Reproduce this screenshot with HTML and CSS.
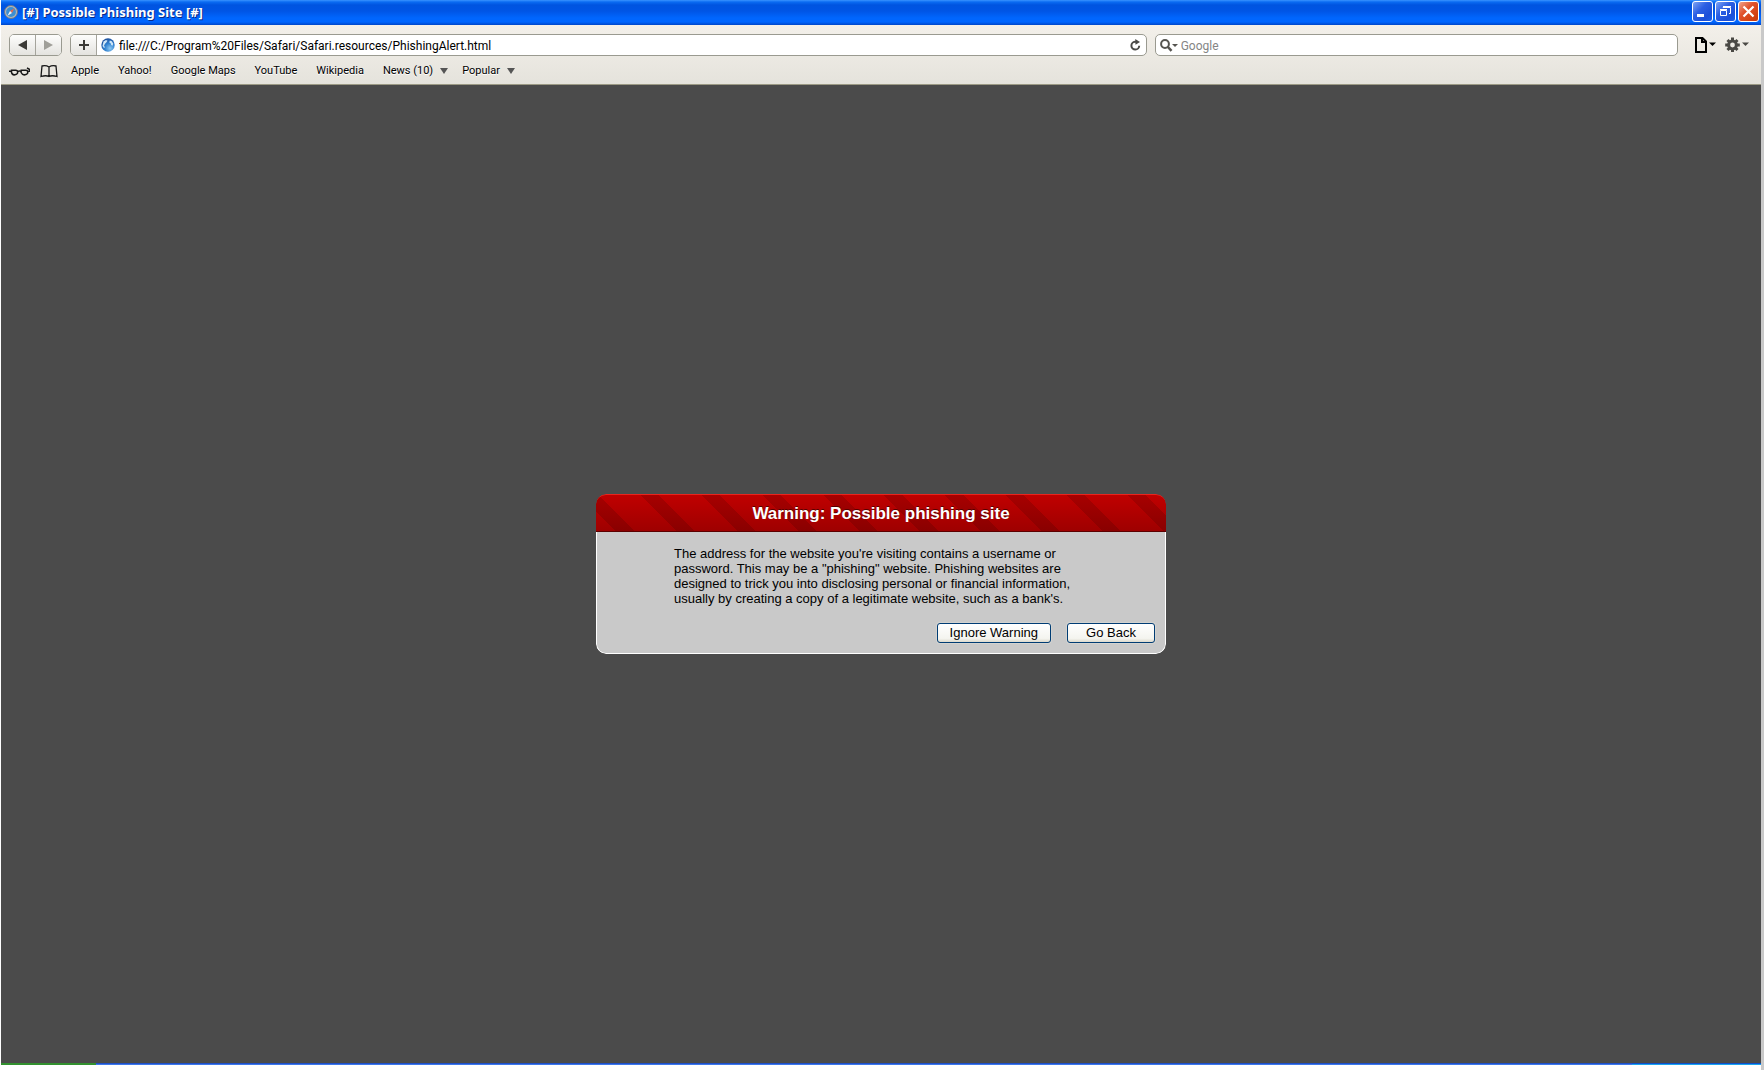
FILE: index.html
```html
<!DOCTYPE html>
<html lang="en">
<head>
<meta charset="utf-8">
<title>[#] Possible Phishing Site [#]</title>
<link rel="stylesheet" href="styles.css">
</head>
<body>
<div class="window">
  <header class="titlebar">
    <svg class="app-icon" width="14" height="14" viewBox="0 0 14 14" aria-hidden="true">
      <circle cx="7" cy="7" r="6.5" fill="#b9b9b9" stroke="#66778c"/>
      <circle cx="7" cy="7" r="4.9" fill="#3b8fd3"/>
      <path d="M10.5 3.2 8 8 6 6z" fill="#e56a4e"/>
      <path d="M3.5 10.8 8 8 6 6z" fill="#f4f7fa"/>
    </svg>
    <h1 class="title">[#] Possible Phishing Site [#]</h1>
    <div class="caption-buttons">
      <button class="caption" type="button" aria-label="Minimize">
        <svg width="19" height="19" viewBox="0 0 19 19"><path d="M4 12h7v3H4z" fill="#fff"/></svg>
      </button>
      <button class="caption" type="button" aria-label="Restore">
        <svg width="19" height="19" viewBox="0 0 19 19" fill="none" stroke="#fff"><path d="M7 6V5.500h7.500v6H13M7 4.500h8M4.500 8.500h6v5h-6zM4 7.500h7"/></svg>
      </button>
      <button class="caption caption-close" type="button" aria-label="Close">
        <svg width="19" height="19" viewBox="0 0 19 19"><path d="M4.500 4.500l10 10M14.500 4.500l-10 10" stroke="#fff" stroke-width="2.200"/></svg>
      </button>
    </div>
  </header>

  <div class="chrome">
    <div class="toolbar">
      <div class="nav">
        <button class="nav-btn" type="button" aria-label="Back"><svg width="9" height="10" viewBox="0 0 9 10"><path d="M9 0v10L0 5z" fill="#3c3b37"/></svg></button>
        <button class="nav-btn" type="button" aria-label="Forward"><svg width="9" height="10" viewBox="0 0 9 10"><path d="M0 0v10l9-5z" fill="#a09f99"/></svg></button>
      </div>
      <div class="address">
        <button class="add" type="button" aria-label="Add bookmark"><svg width="10" height="10" viewBox="0 0 10 10"><path d="M4 0h2v4h4v2H6v4H4V6H0V4h4z" fill="#3c3b37"/></svg></button>
        <svg class="globe" width="14" height="14" viewBox="0 0 14 14" aria-hidden="true">
          <defs><radialGradient id="sea" cx=".65" cy=".75" r=".8"><stop offset="0" stop-color="#8cc8f2"/><stop offset=".5" stop-color="#2f80cf"/><stop offset="1" stop-color="#1c4c98"/></radialGradient></defs>
          <circle cx="7" cy="7" r="6.700" fill="url(#sea)"/>
          <path d="M2.500 3.500 5 2l1.500.8-1 1.500-1.500 1.500-1 2 1 1.500-1 .7L1.500 8zM8.800 2.500l2 .8 1.500 2.400-.8 2-1.300-.7-.4-1.500-1.500-1z" fill="#cfe6f7"/>
        </svg>
        <input class="url" type="text" aria-label="Address" value="file:///C:/Program%20Files/Safari/Safari.resources/PhishingAlert.html">
        <button class="reload" type="button" aria-label="Reload"><svg width="11" height="12" viewBox="0 0 11 12"><path d="M6 2.800H5A3.900 3.900 0 1 0 9.200 6.700" fill="none" stroke="#4b4a48" stroke-width="2"/><path d="M5.200 0 10 3 5.500 5.800z" fill="#4b4a48"/></svg></button>
      </div>
      <div class="search">
        <svg width="18" height="13" viewBox="0 0 18 13" aria-hidden="true"><circle cx="5" cy="5" r="3.900" fill="none" stroke="#555450" stroke-width="2"/><path d="M7.500 7.500l4 4.300" stroke="#555450" stroke-width="2.500"/><path d="M12 5h6l-3 3z" fill="#555450"/></svg>
        <input class="query" type="text" aria-label="Search" placeholder="Google">
      </div>
      <div class="menus">
        <button class="menu" type="button" aria-label="Page menu"><svg width="21" height="16" viewBox="0 0 21 16"><path d="M1 1h6.500L11 4.500V15H1zM7 1v4h4" fill="none" stroke="#000" stroke-width="2"/><path d="M14 5.500h7L17.500 9z" fill="#000"/></svg></button>
        <button class="menu" type="button" aria-label="Settings menu"><svg width="24" height="16" viewBox="0 0 24 16"><g stroke="#4a4945" stroke-width="3"><path d="M7.500.5v3.500M7.500 11.500v3.500M.2 8h3.500M11.300 8h3.500M2.500 3l2 2M10.500 11l2 2M2.500 13l2-2M10.500 5l2-2"/></g><circle cx="7.500" cy="8" r="3.900" fill="none" stroke="#4a4945" stroke-width="3"/><path d="M17 5.500h7L20.500 9z" fill="#4a4945"/></svg></button>
      </div>
    </div>
    <nav class="bookmarks" aria-label="Bookmarks">
      <button class="icon-btn" type="button" aria-label="Reading list"><svg width="21" height="9" viewBox="0 0 21 9" fill="none" stroke="#181818" stroke-width="1.500"><path d="M2.500 3.300h4.200q2 0 2 2t-2.700 2.500-3.500-2.300zM12.200 3.300h4.600q2 0 2 2t-2.700 2.500-4-2.300zM8.700 4.500q2-1 3.500 0M0 4.300h3M18 4.300h2.800V2.500L18 1"/></svg></button>
      <button class="icon-btn" type="button" aria-label="All bookmarks"><svg width="18" height="13" viewBox="0 0 18 13" fill="none" stroke="#181818" stroke-width="1.300"><path d="M9 2v9.500M9 2Q6 0 2 1L1 11.500q5-1.500 8 0 3-1.500 8 0L16 1q-4-1-7 1"/></svg></button>
      <a class="link" href="#">Apple</a>
      <a class="link" href="#">Yahoo!</a>
      <a class="link" href="#">Google Maps</a>
      <a class="link" href="#">YouTube</a>
      <a class="link" href="#">Wikipedia</a>
      <a class="link folder" href="#">News (10)</a>
      <a class="link folder" href="#">Popular</a>
    </nav>
  </div>

  <main class="page">
    <section class="alert" role="alertdialog" aria-labelledby="alert-title">
      <h2 class="alert-title" id="alert-title">Warning: Possible phishing site</h2>
      <div class="alert-body">
        <p class="message">The address for the website you're visiting contains a username or password. This may be a "phishing" website. Phishing websites are designed to trick you into disclosing personal or financial information, usually by creating a copy of a legitimate website, such as a bank's.</p>
        <div class="actions">
          <button class="action" type="button">Ignore Warning</button>
          <button class="action" type="button">Go Back</button>
        </div>
      </div>
    </section>
  </main>
  <footer class="taskbar"><div class="start"></div><div class="tasks"></div><div class="tray"></div></footer>
</div>
</body>
</html>
```
FILE: styles.css
```css
* { box-sizing: border-box; }

body {
  margin: 0;
  background: #fff;
  font-family: Roboto, "Noto Sans", sans-serif;
}

button, input { font: inherit; padding: 0; border: 0; margin: 0; }
button svg { display: block; }

.window {
  display: flex;
  flex-direction: column;
  min-height: 100vh;
  padding: 0 0 5px 1px;
  border-right: 3px solid #c9c9c9;
}

/* Title bar */
.titlebar {
  display: flex;
  align-items: center;
  height: 25px;
  padding: 0 2px 2px 3px;
  background: linear-gradient(#3a94ff 0, #0a6bf2 2px, #0054e0 5px, #0055e5 11px, #0066fe 18px, #0066ff 22px, #0046c8 25px);
}
.title {
  flex: 1;
  margin: 0 0 0 4px;
  color: #fff;
  font: bold 13px/20px "Noto Sans", sans-serif;
  text-shadow: 1px 1px #0a2a86;
}
.caption-buttons { display: flex; gap: 2px; }
.caption {
  width: 21px;
  height: 21px;
  border: 1px solid #fff;
  border-radius: 3px;
  background: linear-gradient(135deg, #7fa4f3, #2c5fe3 40%, #1c4fd8 75%, #1a60ea);
}
.caption-close { background: linear-gradient(135deg, #f0a48c, #e0522c 40%, #d2400f 80%, #c53a10); }

/* Browser toolbar */
.chrome {
  border-bottom: 1px solid #9c9a85;
  background: linear-gradient(#f3f0ea, #e5e3dc);
}
.toolbar {
  display: flex;
  align-items: center;
  gap: 8px;
  padding: 9px 12px 0 8px;
}
.nav, .address, .search {
  display: flex;
  align-items: center;
  height: 22px;
  border: 1px solid #9a9a90;
  border-radius: 5px;
  background: #fff;
  overflow: hidden;
}
.nav-btn, .add {
  display: grid;
  place-items: center;
  width: 26px;
  height: 20px;
  background: linear-gradient(#fdfdfc, #e4e3df);
}
.nav-btn { width: 25px; }
.nav-btn + .nav-btn, .add { width: 26px; border: 0 solid #a5a49c; }
.nav-btn + .nav-btn { border-left-width: 1px; }
.add { border-right-width: 1px; }
.address { flex: 1074 1 0; }
.search { flex: 517 1 0; padding-left: 4px; gap: 3px; }
.globe { margin: 0 4px; }
.url, .query {
  flex: 1;
  min-width: 0;
  height: 20px;
  padding-top: 2px;
  outline: 0;
  background: none;
  color: #000;
  font-size: 12px;
}
.query::placeholder { color: #858585; opacity: 1; }
.reload { margin-right: 5px; background: none; }
.menus { display: flex; gap: 9px; margin-left: 9px; }
.menu, .icon-btn { background: none; }

/* Bookmarks bar */
.bookmarks {
  display: flex;
  align-items: center;
  height: 28px;
  padding: 2px 8px 0;
}
.icon-btn + .icon-btn { margin: 0 4px 0 10px; }
.link {
  padding: 0 10px 0 9px;
  color: #000;
  font-size: 11px;
  line-height: 16px;
  text-decoration: none;
  text-shadow: 0 1px #fff;
}
.folder { display: flex; align-items: center; gap: 7px; padding-right: 5px; }
.folder::after {
  content: "";
  border: solid transparent;
  border-width: 6px 4px 0;
  border-top-color: #555;
}

/* Phishing alert */
.page {
  display: flex;
  flex: 1;
  align-items: center;
  justify-content: center;
  background: #4b4b4b;
}
.alert {
  width: 570px;
  border-radius: 10px;
  overflow: hidden;
  font-family: "Liberation Sans", Arial, sans-serif;
}
.alert-title {
  margin: 0;
  height: 38px;
  border-top: 1px solid #e8261e;
  border-bottom: 1px solid #5c0000;
  border-radius: 10px 10px 0 0;
  background:
    repeating-linear-gradient(45deg, transparent 0 14px, rgba(0, 0, 0, .13) 14px 27px, transparent 27px 43px),
    linear-gradient(#c00000, #9e0000);
  color: #fff;
  font-size: 17px;
  line-height: 37px;
  text-align: center;
  text-shadow: 0 -1px #500;
}
.alert-body {
  padding: 14px 10px 10px 77px;
  border: 1px solid #fff;
  border-top: 0;
  border-radius: 0 0 10px 10px;
  background: #c9c9c9;
}
.message {
  max-width: 402px;
  margin: 0;
  color: #000;
  font-size: 13px;
  line-height: 15px;
}
.actions { display: flex; justify-content: flex-end; gap: 16px; margin-top: 17px; }
.action {
  height: 20px;
  min-width: 88px;
  padding: 0 12px;
  border: 1px solid #003c74;
  border-radius: 3px;
  background: linear-gradient(#fff, #f4f4ef 80%, #dcd9cd);
  box-shadow: 0 0 0 1px #d3d3d0;
  color: #000;
  font-size: 13px;
  line-height: 18px;
}

/* Top edge of the system taskbar */
.taskbar { display: flex; height: 2px; }
.start { width: 95px; background: #32902f; }
.tasks { flex: 1; background: linear-gradient(#1f4fc4 1px, #3d77ea 1px); }
.tray { width: 129px; background: linear-gradient(#0e50c8 1px, #1aa3ee 1px); }
```
